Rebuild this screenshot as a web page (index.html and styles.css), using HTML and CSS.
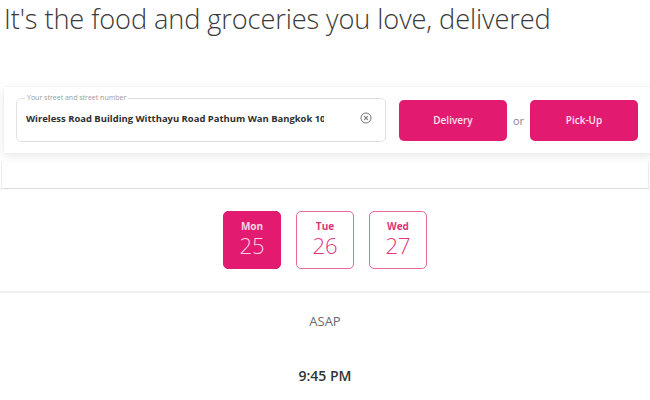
FILE: index.html
```html
<!DOCTYPE html>
<html>
<head>
<meta charset="utf-8">
<link rel="stylesheet" href="styles.css">
</head>
<body>
<h1 class="title">It's the food and groceries you love, delivered</h1>
<div class="search-card">
  <fieldset class="address">
    <legend>Your street and street number</legend>
    <div class="address-row">
      <div class="address-text">Wireless Road Building Witthayu Road Pathum Wan Bangkok 10330</div>
      <svg class="clear" width="12" height="12" viewBox="0 0 12 12"><circle cx="6" cy="6" r="5" fill="none" stroke="#777" stroke-width="1"/><path d="M4.2 4.2 L7.8 7.8 M7.8 4.2 L4.2 7.8" stroke="#777" stroke-width="1.1"/></svg>
    </div>
  </fieldset>
  <button class="btn">Delivery</button>
  <span class="or">or</span>
  <button class="btn">Pick-Up</button>
</div>
<div class="backdrop"></div>
<div class="panel">
  <div class="dates">
    <div class="day active"><span class="dname">Mon</span><span class="dnum">25</span></div>
    <div class="day"><span class="dname">Tue</span><span class="dnum">26</span></div>
    <div class="day"><span class="dname">Wed</span><span class="dnum">27</span></div>
  </div>
  <div class="times">
    <div class="asap">ASAP</div>
    <div class="time">9:45 PM</div>
  </div>
</div>
</body>
</html>
```
FILE: styles.css
```css
html, body { margin: 0; padding: 0; background: #fff; }
body { font-family: "Open Sans", "Liberation Sans", sans-serif; width: 650px; height: 400px; overflow: hidden; }
.title {
  margin: 0;
  padding: 0 0 0 4px;
  font-size: 27.2px;
  font-weight: 300;
  color: #3a3a3a;
  line-height: 38px;
  letter-spacing: -0.1px;
}
.search-card {
  margin: 49px 0 0 4px;
  width: 650px;
  height: 66px;
  box-sizing: border-box;
  padding: 0 0 0 12px;
  background: #fff;
  box-shadow: 0 3px 10px rgba(0,0,0,0.09), 0 0 2px rgba(0,0,0,0.05);
  display: flex;
  align-items: center;
}
.address {
  margin: -7px 0 -3px 0;
  padding: 0 0 0 9px;
  width: 370px;
  height: 48px;
  box-sizing: border-box;
  border: 1px solid #e0e0e0;
  border-radius: 5px;
}
.address legend {
  font-size: 7px;
  color: #9a9a9a;
  padding: 0 2px;
  margin-left: -1px;
  line-height: 8px;
}
.address-row { display: flex; align-items: center; height: 38px; margin-top: -3px; }
.address-text {
  width: 298px;
  overflow: hidden;
  white-space: nowrap;
  font-size: 9.45px;
  font-weight: 700;
  color: #2f2f2f;
}
.clear { margin-left: 36px; }
.btn {
  width: 108px;
  height: 41px;
  border: 0;
  border-radius: 5px;
  background: #e21b70;
  color: #fce4ee;
  font-family: "Open Sans", "Liberation Sans", sans-serif;
  font-size: 10px;
  font-weight: 600;
  padding: 0;
}
.search-card .address + .btn { margin-left: 13px; }
.or { width: 23px; text-align: center; font-size: 11px; color: #888; }
.backdrop {
  margin: 9px 1px 0 1px;
  height: 26px;
  border-left: 1px solid #ececec;
  border-right: 1px solid #ececec;
}
.panel { border-top: 1px solid #dcdcdc; border-radius: 3px 3px 0 0; }
.dates {
  display: flex;
  justify-content: center;
  gap: 15px;
  padding: 22px 0 22px;
  border-bottom: 2px solid #efefef;
}
.day {
  width: 58px;
  height: 58px;
  box-sizing: border-box;
  border: 1.5px solid #e5689c;
  border-radius: 5px;
  display: flex;
  flex-direction: column;
  align-items: center;
  color: #e0357c;
}
.day.active { background: #e21b70; border-color: #e21b70; color: #fbd3e3; }
.dname { font-size: 10px; font-weight: 700; margin-top: 8px; line-height: 13px; }
.dnum { font-size: 22px; font-weight: 300; line-height: 24px; }
.times { text-align: center; }
.asap { font-size: 13px; color: #6a6a6a; padding-top: 19px; line-height: 18px; }
.time { font-size: 14px; font-weight: 600; color: #333; margin-top: 36px; line-height: 20px; }
```
